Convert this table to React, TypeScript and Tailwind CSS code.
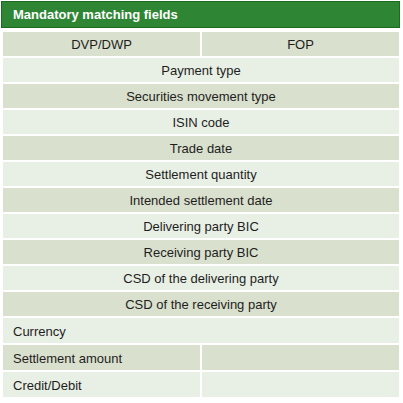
const spanRows = [
  "Payment type",
  "Securities movement type",
  "ISIN code",
  "Trade date",
  "Settlement quantity",
  "Intended settlement date",
  "Delivering party BIC",
  "Receiving party BIC",
  "CSD of the delivering party",
  "CSD of the receiving party",
];

function rowBg(i: number) {
  return i % 2 === 0 ? "bg-[#d9e0cd]" : "bg-[#e8efe5]";
}

export default function App() {
  return (
    <div className="w-[403px] h-[403px] bg-white font-['Liberation_Sans',Arial,sans-serif] text-[13px] text-[#1e1e1e]">
      <div className="ml-px mt-px w-[399px] h-[27px] bg-[#2e8634] border border-[#1c6a20] flex items-center pl-[11px]">
        <span className="text-white font-bold text-[13px]">Mandatory matching fields</span>
      </div>
      <div className="mt-[4px] ml-[3px] w-[396px] grid grid-cols-[197px_197px] gap-[2px] leading-none">
        <div className={`${rowBg(0)} h-[24px] flex items-center justify-center pt-px`}>DVP/DWP</div>
        <div className={`${rowBg(0)} h-[24px] flex items-center justify-center pt-px`}>FOP</div>
        {spanRows.map((label, i) => (
          <div
            key={label}
            className={`${rowBg(i + 1)} col-span-2 h-[24px] flex items-center justify-center pt-px`}
          >
            {label}
          </div>
        ))}
        <div className={`${rowBg(11)} col-span-2 h-[25px] flex items-center pl-[10px] pt-px`}>Currency</div>
        <div className={`${rowBg(12)} h-[25px] flex items-center pl-[10px] pt-px`}>Settlement amount</div>
        <div className={`${rowBg(12)} h-[25px]`} />
        <div className={`${rowBg(13)} h-[25px] flex items-center pl-[10px] pt-px`}>Credit/Debit</div>
        <div className={`${rowBg(13)} h-[25px]`} />
      </div>
    </div>
  );
}
